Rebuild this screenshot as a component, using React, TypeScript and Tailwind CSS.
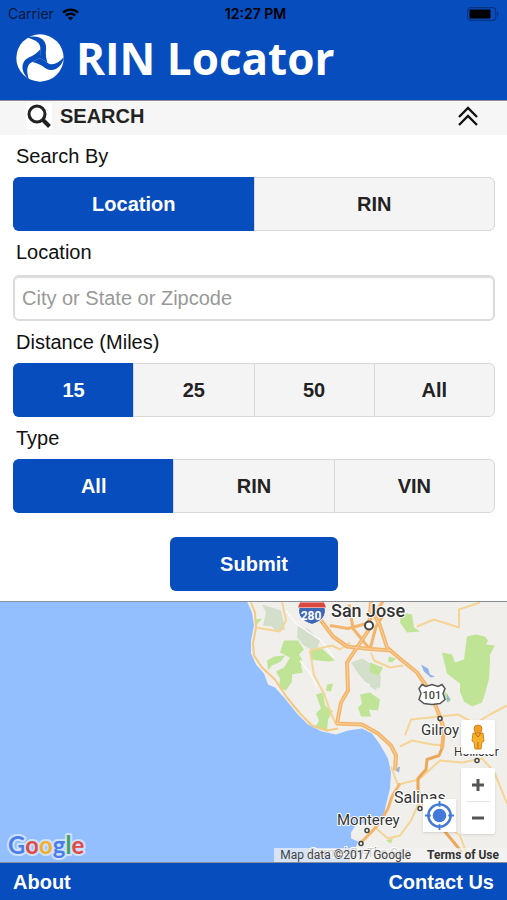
import { useState } from "react";

type SegmentedProps = {
  legend: string;
  name: string;
  options: string[];
  value: string;
  onChange: (value: string) => void;
};

function Segmented({ legend, name, options, value, onChange }: SegmentedProps) {
  return (
    <fieldset>
      <legend className="px-[3px] text-xl leading-[42px]">{legend}</legend>
      <div className="flex h-[54px]">
        {options.map((option) => (
          <label
            key={option}
            className="relative flex flex-1 cursor-pointer items-center justify-center border-y border-l border-[#d8d8d8] bg-[#f4f4f4] text-xl font-bold text-[#222] first:rounded-l-md last:rounded-r-md last:border-r has-checked:border-[#074dbd] has-checked:bg-[#074dbd] has-checked:text-white"
          >
            <input
              type="radio"
              name={name}
              value={option}
              checked={option === value}
              onChange={() => onChange(option)}
              className="sr-only"
            />
            {option}
          </label>
        ))}
      </div>
    </fieldset>
  );
}

const armPath = "M0 0L1 -26C3 -42 -10 -54 -38 -60C-10 -70 20 -58 18 -28C16 -10 18 2 22 14Z";

function Logo() {
  return (
    <svg viewBox="-71 -71 142 142" className="size-12" aria-hidden="true">
      <circle r="70" fill="#fff" />
      <g fill="#074dbd">
        <path d={armPath} />
        <path d={armPath} transform="rotate(120)" />
        <path d={armPath} transform="rotate(240)" />
      </g>
    </svg>
  );
}

function StatusBar() {
  return (
    <div className="grid h-7 grid-cols-3 items-center px-2 font-[Inter,sans-serif] text-sm text-[#04183c]">
      <div className="flex items-center gap-2">
        <span>Carrier</span>
        <svg viewBox="0 0 17 13" className="h-[13px] w-[17px]" fill="none" stroke="#000" strokeWidth="2.3" aria-hidden="true">
          <path d="M1 4.6C5.3 .6 11.700 .6 16 4.600" />
          <path d="M3.800 7.600C6.500 5.100 10.500 5.100 13.200 7.600" />
          <path d="M8.500 12.500L5.800 9.700C7.400 8.300 9.600 8.300 11.200 9.700Z" fill="#000" stroke="none" />
        </svg>
      </div>
      <span className="pl-1 text-center font-semibold text-black">12:27 PM</span>
      <svg viewBox="0 0 32 14" className="h-3.5 w-8 justify-self-end" aria-hidden="true">
        <rect x=".7" y=".7" width="28" height="12.600" rx="3" fill="none" stroke="#06337d" strokeWidth="1.200" />
        <rect x="2.500" y="2.500" width="21" height="9" rx="1" fill="#000" />
        <path d="M30 4.500C31.800 5.500 31.800 8.500 30 9.500Z" fill="#06337d" />
      </svg>
    </div>
  );
}

function MapDrawing() {
  return (
    <svg viewBox="0 601 507 261" preserveAspectRatio="xMidYMid slice" className="absolute inset-0 size-full" role="img" aria-label="Map of Monterey Bay">
      <rect x="0" y="601" width="507" height="261" fill="#94bfff" />
      <path
        d="M247 601L252 612L254 625L251 640L251 653L256 664L264 673L268 684L275 687L284 697L297 713L308 724L322 731L336 734L348 730L362 728L372 733L380 744L388 758L391 772L390 788L386 804L383 818L376 824L366 822L356 824L351 832L351 838L358 841L355 849L350 854L350 862L507 862V601Z"
        fill="#f0efeb"
      />
      <g fill="#d4dfcb">
        <path d="M262 604L281 610L285 629L276 631L272 626L263 625L266 612Z" />
        <path d="M298 625L309 629L320 640L316 652L304 645L297 637Z" />
        <path d="M351 662L362 658L374 665L381 676L380 688L366 682L358 673Z" />
        <path d="M372 664L380 678L376 690L370 686Z" />
      </g>
      <g fill="#bfe495">
        <path d="M284 640L298 640L304 649L299 654L302 659L301 666L303 672L292 674L292 681L286 690L279 687L280 678L276 671L284 667L290 657L280 652Z" />
        <path d="M267 660L274 656L285 655L281 661L272 665L268 670Z" />
        <path d="M309 651L322 648L335 660L329 661L318 660L312 659Z" />
        <path d="M316 694L323 692L325 705L333 711L328 719L327 731L315 727L319 720L316 713L321 708Z" />
        <path d="M327 684L333 683L331 691L326 690Z" />
        <path d="M360 694L370 692L380 699L378 710L369 709L371 716L361 716L358 707L362 703Z" />
        <path d="M401 612L412 614L414 627L420 631L407 632L400 622Z" />
        <path d="M467 636L476 634L485 636L488 640L486 644L495 645L490 654L490 661L489 678L486 690L482 702L472 706L464 701L460 691L460 683L447 673L442 652L452 654L455 662L464 659Z" />
        <path d="M370 662L383 667L379 675L370 672Z" />
        <path d="M389 656L396 658L392 662L388 661Z" />
        <path d="M444 690L451 699L449 702L444 698Z" />
        <path d="M386 840L393 838L391 843Z" />
        <path d="M255 619L262 618L257 624Z" />
      </g>
      <g fill="#8db5e8">
        <path d="M421 664L428 668L430 674L435 676L431 677L424 671Z" />
        <path d="M447 693L450 699L447 702Z" />
        <path d="M394 769L400 766L399 772Z" />
      </g>

      <g fill="none" stroke="#fafafa" strokeWidth="1.500">
        <path d="M286 610L296 623L321 640L334 657" />
        <path d="M300 660L311 674L317 686" />
      </g>

      <g fill="none" stroke="#f5d596" strokeWidth="2" strokeLinejoin="round">
        <path d="M251 602L255 612L256 627L253 643L254 655L262 667L275 679L287 697L300 713L312 725L327 730L338 728" stroke="#f3c983" />
        <path d="M256 627L280 631L286 620L282 601" />
        <path d="M310 650L314 675L324 693L331 713L336 724" />
        <path d="M310 650L332 645L340 649L350 642" />
        <path d="M417 626L434 619L459 627L459 609L480 602" />
        <path d="M371 652L374 660L390 667L403 665" />
        <path d="M400 746L412 740L432 744L444 745" />
        <path d="M405 735L411 719L440 716L458 714L475 723L490 714L507 705" />
        <path d="M398 784L419 779L440 760L462 762L482 758L494 771L507 803" />
        <path d="M418 784L420 800L411 820L400 835L388 838L375 827" />
        <path d="M391 766L398 785" />
        <path d="M428 804L439 820L460 835L468 857L475 850" />
      </g>
      <g fill="none" stroke="#f3b56c" strokeWidth="4" strokeLinejoin="round">
        <path d="M337 723L341 702L348 690L347 662L355 650L369 629L371 601" />
        <path d="M336 723L362 724L378 733L391 745L396 755L395 770" />
        <path d="M318 616L333 636L347 646L365 648L391 650" />
        <path d="M330 625L348 628L367 623L383 601" strokeWidth="3" />
        <path d="M349 604L353 628L370 649L376 626L387 609" strokeWidth="3" />
        <path d="M371 608L380 625L387 647L401 659L417 672L428 688L438 711L444 729L442 748" />
        <path d="M442 748L439 755L427 759L426 769L418 778L418 790L424 804L434 818L454 842L462 852" stroke="#e9a85a" strokeWidth="3" />
        <path d="M400 783L392 796L388 808L380 822L370 833L361 842" strokeWidth="3" />
      </g>
      <g fill="none" stroke="#fbd19a" strokeWidth="1">
        <path d="M337 723L341 702L348 690L347 662L355 650L369 629L371 601" />
        <path d="M318 616L333 636L347 646L365 648L391 650" />
        <path d="M336 723L362 724L378 733L391 745L396 755L395 770" />
        <path d="M371 608L380 625L387 647L401 659L417 672L428 688L438 711L444 729" />
      </g>

      <g>
        <path d="M299 607H325C327 615 322 621 312 624C302 621 297 615 299 607Z" fill="#3f68b5" stroke="#fff" />
        <path d="M300 602H324L326 607H298Z" fill="#d9473f" />
        <text x="311" y="619" textAnchor="middle" fontSize="12" fontWeight="700" fontFamily="Roboto, sans-serif" fill="#fff">280</text>
        <path d="M422 684L426 686L432 684L438 686L442 684L445 688L443 693L445 699L440 703L432 704L424 703L419 699L421 693L419 688Z" fill="#fff" stroke="#555" strokeWidth="1.500" />
        <text x="432" y="698" textAnchor="middle" fontSize="11" fontWeight="500" fontFamily="Roboto, sans-serif" fill="#444">101</text>
      </g>

      <g fill="#fff" stroke="#444" strokeWidth="1.500">
        <circle cx="369" cy="625" r="4" strokeWidth="2" />
        <circle cx="440" cy="718" r="2" />
        <circle cx="477" cy="760" r="2" />
        <circle cx="420" cy="808" r="2" />
        <circle cx="367" cy="830" r="2" />
        <circle cx="361" cy="843" r="2" />
      </g>

      <g fontFamily="Roboto, sans-serif" fill="#333" stroke="#fff" strokeWidth="2" paintOrder="stroke" strokeLinejoin="round">
        <text x="331" y="616" fontSize="18" fontWeight="500">San Jose</text>
        <text x="421" y="734" fontSize="15">Gilroy</text>
        <text x="454" y="755" fontSize="12">Hollister</text>
        <text x="394" y="802" fontSize="16">Salinas</text>
        <text x="337" y="824" fontSize="15">Monterey</text>
        <text x="309" y="856" fontSize="12" fill="#777">Carmel-By-The-Sea</text>
      </g>
    </svg>
  );
}

function GoogleLogo() {
  return (
    <svg viewBox="0 0 90 40" className="absolute bottom-0 left-1 h-10 w-[90px] overflow-visible" role="img" aria-label="Google">
      <text x="4" y="32" fontSize="24" fontWeight="700" fontFamily="Lato, sans-serif" stroke="#cfe1ff" strokeWidth="4" paintOrder="stroke" strokeLinejoin="round">
        <tspan fill="#4b7fe8">G</tspan>
        <tspan fill="#df4a42">o</tspan>
        <tspan fill="#efb02e">o</tspan>
        <tspan fill="#4b7fe8">g</tspan>
        <tspan fill="#3fa25b">l</tspan>
        <tspan fill="#df4a42">e</tspan>
      </text>
    </svg>
  );
}

function MapPanel() {
  return (
    <section className="relative min-h-[262px] flex-1 overflow-hidden border-y border-[#8a8f99]">
      <MapDrawing />
      <GoogleLogo />
      <div className="absolute right-0 bottom-0 flex h-[14px] items-center gap-4 bg-[#f4f4f4]/70 pr-2 pl-1.5 font-[Roboto,sans-serif] text-xs leading-[14px] text-[#444]">
        <span>Map data ©2017 Google</span>
        <a href="#terms" className="font-bold text-[#333]">Terms of Use</a>
      </div>
      <button type="button" aria-label="My location" className="absolute right-[51px] bottom-[30px] flex size-[33px] items-center justify-center bg-white shadow-sm">
        <svg viewBox="0 0 32 32" className="size-[31px]" fill="none" stroke="#4379d8" aria-hidden="true">
          <circle cx="16" cy="16" r="11.500" strokeWidth="2.500" />
          <circle cx="16" cy="16" r="7" fill="#4379d8" stroke="none" />
          <path d="M16 1V7M16 25V31M1 16H7M25 16H31" strokeWidth="2" />
        </svg>
      </button>
      <div className="absolute right-3 bottom-7 flex flex-col gap-3.5">
        <button type="button" aria-label="Street View" className="flex size-[34px] items-center justify-center rounded-xs bg-white shadow-sm">
          <svg viewBox="0 0 16 26" className="h-[26px] w-4" aria-hidden="true">
            <path d="M3 9H13L14 17L12 18L11 25H5L4 18L2 17Z" fill="#f5b02c" stroke="#d8861c" />
            <path d="M5 9L8 13L11 9M8 18V25" fill="none" stroke="#b76a16" />
            <circle cx="8" cy="5" r="4" fill="#f0a020" stroke="#d8861c" />
          </svg>
        </button>
        <div className="flex w-[34px] flex-col items-center rounded-xs bg-white shadow-sm">
          <button type="button" aria-label="Zoom in" className="flex h-[33px] w-full items-center justify-center">
            <svg viewBox="0 0 14 14" className="size-3.5" stroke="#555" strokeWidth="3" aria-hidden="true">
              <path d="M1 7H13M7 1V13" />
            </svg>
          </button>
          <div className="h-px w-6 bg-[#e6e6e6]" />
          <button type="button" aria-label="Zoom out" className="flex h-8 w-full items-center justify-center">
            <svg viewBox="0 0 14 14" className="size-3.5" stroke="#555" strokeWidth="3" aria-hidden="true">
              <path d="M1 7H13" />
            </svg>
          </button>
        </div>
      </div>
    </section>
  );
}

export default function App() {
  const [searchBy, setSearchBy] = useState("Location");
  const [distance, setDistance] = useState("15");
  const [type, setType] = useState("All");

  return (
    <div className="flex min-h-screen flex-col bg-white font-['Liberation_Sans',Arial,sans-serif] text-[#111]">
      <header className="border-b border-[#8a8f99] bg-[#074dbd] pb-3">
        <StatusBar />
        <div className="flex h-[60px] items-center gap-3 px-4">
          <Logo />
          <h1 className="font-['Open_Sans',sans-serif] text-[44px] leading-[60px] font-bold text-white">RIN Locator</h1>
        </div>
      </header>

      <button type="button" className="flex h-[34px] items-center gap-2 bg-[#f6f6f6] pr-[29px] pb-1 pl-[26px] text-[#222]">
        <span className="bg-white">
          <svg viewBox="0 0 26 26" className="size-[26px]" fill="none" stroke="#222" aria-hidden="true">
            <circle cx="11" cy="11" r="8" strokeWidth="3" />
            <path d="M17 17L23.500 23.500" strokeWidth="4" />
          </svg>
        </span>
        <span className="text-xl font-bold">SEARCH</span>
        <svg viewBox="0 0 20 20" className="ml-auto size-5" fill="none" stroke="#111" strokeWidth="2.300" aria-hidden="true">
          <path d="M1 11L10 2L19 11M1 19L10 10L19 19" />
        </svg>
      </button>

      <form className="flex flex-col pr-3 pb-[10px] pl-[13px]" onSubmit={(event) => event.preventDefault()}>
        <Segmented legend="Search By" name="searchBy" options={["Location", "RIN"]} value={searchBy} onChange={setSearchBy} />
        <label htmlFor="location" className="px-[3px] text-xl leading-[42px]">Location</label>
        <input
          id="location"
          type="text"
          placeholder="City or State or Zipcode"
          className="mt-0.5 h-[46px] w-full rounded-md border-2 border-[#dcdcdc] bg-white px-[7px] text-xl shadow-[inset_0_1px_1px_#ddd] placeholder:text-[#999]"
        />
        <Segmented legend="Distance (Miles)" name="distance" options={["15", "25", "50", "All"]} value={distance} onChange={setDistance} />
        <Segmented legend="Type" name="type" options={["All", "RIN", "VIN"]} value={type} onChange={setType} />
        <button type="submit" className="mt-6 h-[54px] w-[168px] self-center rounded-md bg-[#074dbd] text-xl font-bold text-white">
          Submit
        </button>
      </form>

      <MapPanel />

      <footer className="flex h-[37px] items-center justify-between bg-[#074dbd] px-[13px] text-xl font-bold text-white">
        <a href="#about">About</a>
        <a href="#contact">Contact Us</a>
      </footer>
    </div>
  );
}
